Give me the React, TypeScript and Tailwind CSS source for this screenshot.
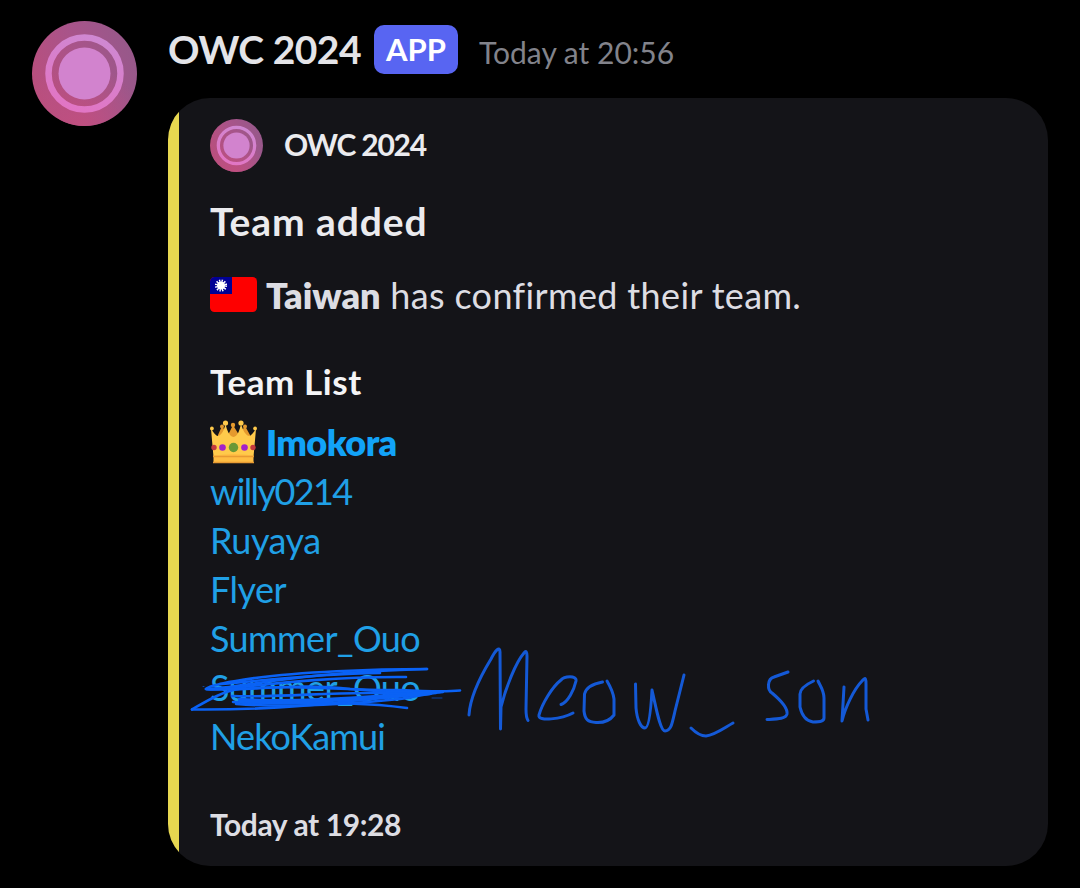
import React from 'react';

interface Player {
    name: string;
    tracking: string;
    struck?: boolean;
}

const players: Player[] = [
    { name: 'willy0214', tracking: 'tracking-[-1.6px]' },
    { name: 'Ruyaya', tracking: 'tracking-[-0.5px]' },
    { name: 'Flyer', tracking: 'tracking-[-0.5px]' },
    { name: 'Summer_Ouo', tracking: 'tracking-[-0.6px]' },
    { name: 'Summer_Ouo', tracking: 'tracking-[-0.6px]', struck: true },
    { name: 'NekoKamui', tracking: 'tracking-[-0.9px]' },
];

const Avatar: React.FC<{ id: string; className: string }> = ({ id, className }) => (
    <svg viewBox="0 0 105 105" className={className} aria-hidden="true">
        <defs>
            <linearGradient id={`${id}-base`} x1="0.05" y1="0.65" x2="0.95" y2="0.35">
                <stop offset="0" stopColor="#b84f7e" />
                <stop offset="0.5" stopColor="#a8548a" />
                <stop offset="1" stopColor="#98588a" />
            </linearGradient>
            <linearGradient id={`${id}-ring`} x1="0.3" y1="1" x2="0.7" y2="0">
                <stop offset="0" stopColor="#e275c4" />
                <stop offset="1" stopColor="#cf88d2" />
            </linearGradient>
            <radialGradient id={`${id}-glow`} cx="0.45" cy="1" r="0.6">
                <stop offset="0" stopColor="#c04f80" />
                <stop offset="1" stopColor="#c04f80" stopOpacity="0" />
            </radialGradient>
        </defs>
        <circle cx="52.5" cy="52.5" r="52.5" fill={`url(#${id}-base)`} />
        <circle cx="52.5" cy="52.5" r="52.5" fill={`url(#${id}-glow)`} />
        <circle cx="52.5" cy="52.5" r="36" fill="none" stroke={`url(#${id}-ring)`} strokeWidth="6.5" />
        <circle cx="52.5" cy="52.5" r="26" fill="#d283ce" />
    </svg>
);

const TaiwanFlag: React.FC = () => (
    <svg viewBox="0 0 47 35" className="h-[35px] w-[47px] shrink-0" role="img" aria-label="Taiwan flag">
        <clipPath id="flag-shape">
            <rect width="47" height="35" rx="4.5" />
        </clipPath>
        <g clipPath="url(#flag-shape)">
            <rect width="47" height="35" fill="#fe0000" />
            <rect width="22" height="17" fill="#000095" />
            <circle cx="11" cy="8.5" r="4.8" fill="none" stroke="#fff" strokeWidth="2.6" strokeDasharray="1.3 1.213" />
            <circle cx="11" cy="8.5" r="4" fill="#fff" />
        </g>
    </svg>
);

const Crown: React.FC = () => (
    <svg viewBox="0 0 47 44" className="-mt-0.5 h-11 w-[47px] shrink-0" role="img" aria-label="Captain">
        <path d="M8 15 12 6 18 15 23 5 29 15 35 6 40 15V24H8z" fill="#e59a2e" />
        <circle cx="12" cy="6.5" r="2" fill="#e59a2e" />
        <circle cx="23" cy="5" r="2.2" fill="#e59a2e" />
        <circle cx="35" cy="6.5" r="2" fill="#e59a2e" />
        <path d="M1 9C4 13 6 16 8 16 12 15 14 10 15.5 4 17 10 19 16 23.500 17 28 16 29.500 10 31 4 33 10 35 15 39 16 41 16 43 13 46 9L43.500 37H3.500z" fill="#ffca4b" />
        <circle cx="1.9" cy="8.5" r="1.9" fill="#ffca4b" />
        <circle cx="15.5" cy="3" r="2.6" fill="#ffca4b" />
        <circle cx="31" cy="3" r="2.6" fill="#ffca4b" />
        <circle cx="45.1" cy="8.5" r="1.9" fill="#ffca4b" />
        <path d="M3.5 35.5Q23.5 32.5 43.5 35.5V43H3.5z" fill="#ffbd43" />
        <path d="M3 36.5H44M3 42.5H44" stroke="#e89b33" strokeWidth="1.5" />
        <circle cx="4" cy="27.5" r="2.7" fill="#c33a3f" />
        <circle cx="12.5" cy="27.5" r="3.3" fill="#a321c9" />
        <circle cx="23.5" cy="27.5" r="4.7" fill="#6b9836" />
        <circle cx="34.5" cy="27.5" r="3.3" fill="#a321c9" />
        <circle cx="43" cy="27.5" r="2.7" fill="#c33a3f" />
    </svg>
);

// Freehand pen marks over the struck player's row
const PenMarks: React.FC = () => (
    <svg
        viewBox="190 640 700 110"
        className="pointer-events-none absolute -top-[23px] -left-[20px] h-[110px] w-[700px]"
        fill="none"
        strokeLinecap="round"
        strokeLinejoin="round"
        role="img"
        aria-label="Meow_son"
    >
        <g stroke="#0a62f5" strokeWidth="2.6">
            <path d="M427 669C370 669 300 672 255 678 235 681 208 685 206 689 212 693 300 676 406 677" />
            <path d="M206 689C240 688 300 672 427 669" />
            <path d="M220 684C250 682 310 674 380 673" />
            <path d="M192 709.5C250 710 310 706 350 701 390 698 420 694 443 692" />
            <path d="M192 709.5C205 702 222 691 240 689 300 684 350 691 400 690 420 691 445 692 460 690.5" />
            <path d="M206 689C240 692 300 682 350 689 380 692 410 693 440 692" />
            <path d="M233 702C280 706 340 699 407 708" />
            <path d="M236 704C290 708 350 704 400 699 415 697 425 694 436 693" />
            <path d="M240 700C300 704 360 698 430 693" strokeWidth="4.5" />
            <path d="M232 696C290 698 340 690 405 694" />
            <path d="M203 686.5h1M432 698h10" strokeWidth="1" opacity="0.6" />
        </g>
        <g stroke="#1459d6" strokeWidth="3">
            <path d="M469 715C470 698 480 677 491 659 495 651 500 645 500 652L500.5 729 501 707C506 687 516 662 524 653 526 650 527 652 527 656L526 709C526 716 527 719 528 720.5" />
            <path d="M561 704.5C568 702 574 690 576 681 577 675 564 676 561 680 552 687 542 704 539 715 537 722 562 719 573 713" />
            <path d="M602.5 682C592 684 586 688 584.5 694L584 711C585 720 588 722 596 722.5 605 723 611 719 614 715L614 699C613 691 610 686 607 681" />
            <path d="M635.5 684 636 708C637 720 641 728 645 728 649 728 651 708 652 690 656 707 660 731 665 731 671 731 672 724 675 711L684 675" />
            <path d="M691 728C697 734 701 736 706 736 715 735 724 728 733 723" />
            <path d="M788 672 774 677C767 679 767 690 772 693 778 698 788 707 787 714 786 719 777 719 767 719.5" />
            <path d="M813.5 681C805 685 800 689 800 694L800 707C802 716 806 721 813 722 821 722 824 721 824 718L824 698C824 691 821 687 818 681" />
            <path d="M844 687 842 721C845 708 854 689 862 681 866 676 866 680 866 684L866 709 868 720" />
        </g>
    </svg>
);

const App: React.FC = () => {
    return (
        <div className="flex h-[888px] w-[1080px] items-start gap-[31px] overflow-hidden bg-black pt-[21px] pl-8 font-['Lato',sans-serif] whitespace-nowrap">
            <Avatar id="author" className="size-[105px] shrink-0" />
            <div className="w-[880px]">
                <header className="flex h-14 items-baseline leading-[56px]">
                    <span className="w-[194px] text-[39px] font-bold tracking-[-0.5px] text-[#e4e4e8]">OWC 2024</span>
                    <span className="mt-1 ml-3 flex h-[49px] w-[84px] items-center justify-center self-start rounded-[10px] bg-[#5865f2] pb-0.5 text-[31px] font-bold text-white">
                        APP
                    </span>
                    <time className="ml-[21px] text-[30px] text-[#82838b]">Today at 20:56</time>
                </header>

                <article className="mt-[21px] flex h-[768px] overflow-hidden rounded-[42px] bg-[#141418]">
                    <div className="w-[11px] shrink-0 bg-[#e7d750]" />
                    <div className="flex-1 pt-[21px] pl-[31px] text-[#dddde3]">
                        <div className="flex items-center gap-[21px]">
                            <Avatar id="embed" className="size-[53px] shrink-0" />
                            <span className="pb-0.5 text-[30px] font-bold tracking-[-1.2px] text-[#ebebee]">OWC 2024</span>
                        </div>
                        <h2 className="mt-[23px] text-[39px] leading-[52px] font-bold tracking-[0.9px] text-[#ebebee]">Team added</h2>
                        <p className="mt-[23px] flex items-center gap-[9px] text-[36px]">
                            <TaiwanFlag />
                            <span className="pt-0.5 leading-[47px]">
                                <strong className="font-extrabold">Taiwan</strong>
                                <span className="tracking-[0.35px]"> has confirmed their team.</span>
                            </span>
                        </p>

                        <h3 className="mt-10 text-[35px] leading-[44px] font-bold tracking-[0.6px] text-[#f4f4f6]">Team List</h3>
                        <ul className="mt-[15px] text-[36px] leading-[49px] text-[#20a0e6]">
                            <li className="flex items-center gap-[9px]">
                                <Crown />
                                <span className="font-extrabold tracking-[-0.6px] text-[#12a3f8]">Imokora</span>
                            </li>
                            {players.map((player, index) => (
                                <li key={index} className="relative">
                                    <span className={player.tracking}>{player.name}</span>
                                    {player.struck && <PenMarks />}
                                </li>
                            ))}
                        </ul>

                        <footer className="mt-[43px] text-[30px] leading-10 font-bold tracking-[-0.4px]">Today at 19:28</footer>
                    </div>
                </article>
            </div>
        </div>
    );
};

export default App;
